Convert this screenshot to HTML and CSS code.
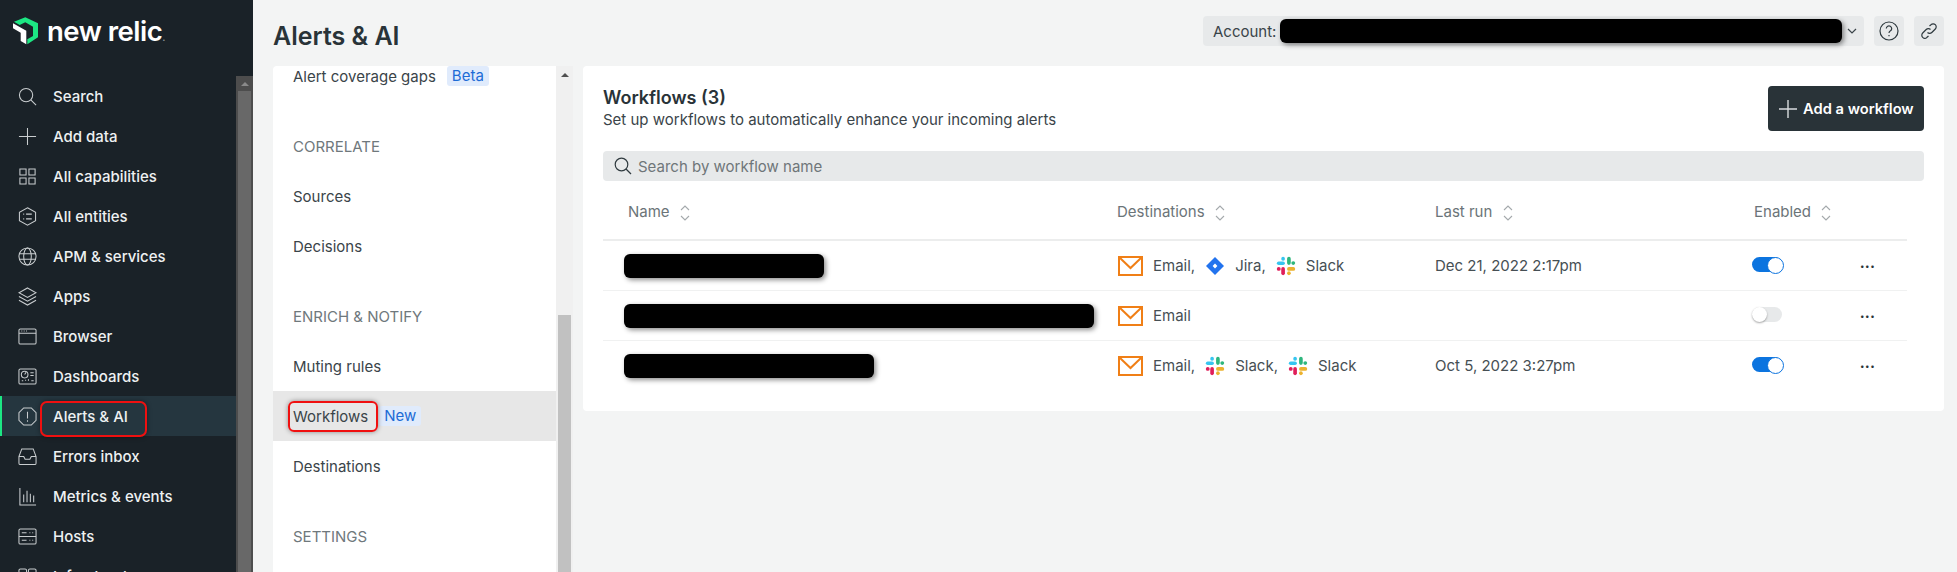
FILE: index.html
```html
<!DOCTYPE html>
<html lang="en">
<head>
  <meta charset="UTF-8" />
  <title>Alerts &amp; AI - Workflows</title>
  <link rel="stylesheet" href="styles.css">
</head>
<body>
  <svg class="sprite" width="0" height="0">
    <symbol id="mail" viewBox="0 0 25 20">
      <path d="M1 1h23v18H1z M1 1l11.5 11L24 1" fill="none" stroke="#f07f16" stroke-width="2"/>
    </symbol>
    <symbol id="slack" viewBox="0 0 24 24">
      <rect x="1" y="6.500" width="9.700" height="4.400" rx="2.200" fill="#36c5f0"/>
      <rect x="6.300" y="1" width="4.400" height="4.800" rx="2.200" fill="#36c5f0"/>
      <rect x="13.300" y="1" width="4.400" height="9.700" rx="2.200" fill="#2eb67d"/>
      <rect x="18.400" y="6.300" width="4.600" height="4.400" rx="2.200" fill="#2eb67d"/>
      <rect x="13.300" y="13.300" width="9.700" height="4.400" rx="2.200" fill="#ecb22e"/>
      <rect x="13.300" y="18.400" width="4.400" height="4.600" rx="2.200" fill="#ecb22e"/>
      <rect x="6.300" y="13.300" width="4.400" height="9.700" rx="2.200" fill="#e01e5a"/>
      <rect x="1" y="13.300" width="4.600" height="4.400" rx="2.200" fill="#e01e5a"/>
    </symbol>
    <symbol id="jira" viewBox="0 0 20 20">
      <path d="M10 1l9 9-9 9-9-9z" fill="#2273ee"/>
      <path d="M10 7.600l2.400 2.400-2.400 2.400-2.400-2.400z" fill="#fff"/>
    </symbol>
    <symbol id="sort" viewBox="0 0 10 18">
      <path d="M1 6l4-4 4 4M1 12l4 4 4-4" fill="none" stroke="#a4a9ac" stroke-width="1.100"/>
    </symbol>
  </svg>

  <nav class="sidebar">
    <div class="sidebar-main">
      <div class="logo">
        <svg class="logo-mark" width="26" height="30" viewBox="0 0 26 30">
          <path d="M1 5.700l11.300-4.400L25 7.300v14l-10.700 7v-5l5.700-3.300v-9.300l-7.700-4.400L6.700 9z" fill="#1ce783"/>
          <path d="M0 7.300l13.300 7.400v13.600l-5.600-3.300v-8.300L0 12.300z" fill="#fff"/>
        </svg>
        <span class="logo-text">new relic<small>.</small></span>
      </div>
      <a class="nav-item">
        <svg class="nav-icon" viewBox="0 0 20 20"><circle cx="8.500" cy="8.500" r="7"/><path d="M13.500 13.500l5.500 5.500"/></svg>
        <span>Search</span>
      </a>
      <a class="nav-item">
        <svg class="nav-icon" viewBox="0 0 20 20"><path d="M10 1v18M1 10h18"/></svg>
        <span>Add data</span>
      </a>
      <a class="nav-item">
        <svg class="nav-icon" viewBox="0 0 20 20"><path d="M2 2h6.500v6.500H2zM11.500 2H18v6.500h-6.500zM2 11.500h6.500V18H2zM11.500 11.500H18V18h-6.500z"/></svg>
        <span>All capabilities</span>
      </a>
      <a class="nav-item">
        <svg class="nav-icon" viewBox="0 0 20 20"><path d="M10 .8l8.500 4.700v9L10 19.200l-8.500-4.700v-9z"/><path d="M8.500 7.500h6M8.500 12.500h6M5.500 7.500h1M5.500 12.500h1"/></svg>
        <span>All entities</span>
      </a>
      <a class="nav-item">
        <svg class="nav-icon" viewBox="0 0 20 20"><circle cx="10" cy="10" r="9"/><ellipse cx="10" cy="10" rx="4" ry="9"/><path d="M1.500 7h17M1.500 13h17"/></svg>
        <span>APM &amp; services</span>
      </a>
      <a class="nav-item">
        <svg class="nav-icon" viewBox="0 0 20 20"><path d="M10 1l9 5-9 5-9-5z"/><path d="M1 10l9 5 9-5M1 14l9 5 9-5"/></svg>
        <span>Apps</span>
      </a>
      <a class="nav-item">
        <svg class="nav-icon" viewBox="0 0 20 20"><rect x="1" y="2" width="18" height="16" rx="1.500"/><path d="M1 6.500h18M3.500 4.300h1M6 4.300h1M8.500 4.300h1"/></svg>
        <span>Browser</span>
      </a>
      <a class="nav-item">
        <svg class="nav-icon" viewBox="0 0 20 20"><rect x="1" y="2" width="18" height="16" rx="1.500"/><circle cx="7" cy="8" r="3.500"/><path d="M7 8l1.500-2.500M13 6h3.500M13 9h3.500M4 14.500h1.500M8 14.500v-1M11 14.500v-1.500M14 14.500h2.500"/></svg>
        <span>Dashboards</span>
      </a>
      <a class="nav-item active">
        <svg class="nav-icon" viewBox="0 0 20 20"><path d="M6 1h8l5 5v8l-5 5H6l-5-5V6z"/><path d="M10 5v7M10 14v1.500"/></svg>
        <span>Alerts &amp; AI</span>
        <i class="callout callout-nav"></i>
      </a>
      <a class="nav-item">
        <svg class="nav-icon" viewBox="0 0 20 20"><path d="M1 10l3-8h12l3 8v7a1.500 1.500 0 0 1-1.500 1.500h-15A1.500 1.500 0 0 1 1 17z"/><path d="M1 10h5l1.500 3h5L14 10h5"/></svg>
        <span>Errors inbox</span>
      </a>
      <a class="nav-item">
        <svg class="nav-icon" viewBox="0 0 20 20"><path d="M2 1v18h17M6 8v8M9.500 4v12M13 7v9M16.500 9v7"/></svg>
        <span>Metrics &amp; events</span>
      </a>
      <a class="nav-item">
        <svg class="nav-icon" viewBox="0 0 20 20"><rect x="1" y="2" width="18" height="16" rx="1.500"/><path d="M1 10h18M4 6h5M12 6h1M15 6h1M4 14h5M12 14h1M15 14h1"/></svg>
        <span>Hosts</span>
      </a>
      <a class="nav-item">
        <svg class="nav-icon" viewBox="0 0 20 20"><rect x="1" y="2" width="8" height="16" rx="1.500"/><rect x="11" y="2" width="8" height="16" rx="1.500"/></svg>
        <span>Infrastructure</span>
      </a>
    </div>
    <div class="sidebar-scroll">
      <span class="scroll-arrow"></span>
      <span class="scroll-thumb"></span>
    </div>
  </nav>

  <main class="main">
    <header class="topbar">
      <h1 class="page-title">Alerts &amp; AI</h1>
      <div class="top-actions">
        <div class="account">
          <span>Account:</span>
          <span class="redact redact-account"></span>
          <svg width="10" height="6" viewBox="0 0 10 6"><path d="M1 1l4 4 4-4" fill="none" stroke="#3a4449" stroke-width="1.200"/></svg>
        </div>
        <button class="icon-btn">
          <svg width="20" height="20" viewBox="0 0 20 20"><circle cx="10" cy="10" r="9" fill="none" stroke="#2f3a3f" stroke-width="1.200"/><path d="M7.300 7.500a2.700 2.700 0 1 1 4.200 2.300c-.9.600-1.500 1-1.500 2.200M10 14v1.200" fill="none" stroke="#2f3a3f" stroke-width="1.200"/></svg>
        </button>
        <button class="icon-btn">
          <svg width="18" height="18" viewBox="0 0 18 18"><path d="M7.500 10.500a3 3 0 0 0 4.300 0l3.500-3.500a3 3 0 0 0-4.300-4.300L9.500 4M10.500 7.500a3 3 0 0 0-4.300 0L2.700 11a3 3 0 0 0 4.300 4.300L8.500 14" fill="none" stroke="#2f3a3f" stroke-width="1.200"/></svg>
        </button>
      </div>
    </header>

    <div class="content">
      <div class="menu-wrap">
        <div class="menu">
          <div class="menu-list">
            <a class="menu-item">Alert coverage gaps <span class="badge badge-beta">Beta</span></a>
            <div class="menu-section">CORRELATE</div>
            <a class="menu-item">Sources</a>
            <a class="menu-item">Decisions</a>
            <div class="menu-section">ENRICH &amp; NOTIFY</div>
            <a class="menu-item">Muting rules</a>
            <a class="menu-item selected"><span class="callout-text">Workflows</span> <span class="badge">New</span></a>
            <a class="menu-item">Destinations</a>
            <div class="menu-section">SETTINGS</div>
          </div>
        </div>
        <div class="menu-scroll">
          <span class="menu-arrow"></span>
          <span class="menu-thumb"></span>
        </div>
      </div>

      <section class="card">
        <div class="card-head">
          <div>
            <h2 class="card-title">Workflows (3)</h2>
            <p class="card-sub">Set up workflows to automatically enhance your incoming alerts</p>
          </div>
          <button class="add-btn">
            <svg width="18" height="18" viewBox="0 0 18 18"><path d="M9 0v18M0 9h18" stroke="#d8dcde" stroke-width="1.400"/></svg>
            Add a workflow
          </button>
        </div>

        <div class="search-box">
          <svg width="18" height="18" viewBox="0 0 18 18"><circle cx="7.500" cy="7.500" r="6.300" fill="none" stroke="#2f3a3f" stroke-width="1.200"/><path d="M12 12l5 5" stroke="#2f3a3f" stroke-width="1.200"/></svg>
          <span>Search by workflow name</span>
        </div>

        <div class="table">
          <div class="row row-head">
            <div class="cell-name">Name <svg class="sort"><use href="#sort"/></svg></div>
            <div>Destinations <svg class="sort"><use href="#sort"/></svg></div>
            <div>Last run <svg class="sort"><use href="#sort"/></svg></div>
            <div>Enabled <svg class="sort"><use href="#sort"/></svg></div>
            <div></div>
          </div>

          <div class="row">
            <div><span class="redact redact-name" style="width: 200px"></span></div>
            <div class="dests">
              <svg class="ic-mail"><use href="#mail"/></svg><span>Email,</span>
              <svg class="ic-svc"><use href="#jira"/></svg><span>Jira,</span>
              <svg class="ic-svc"><use href="#slack"/></svg><span>Slack</span>
            </div>
            <div>Dec 21, 2022 2:17pm</div>
            <div><span class="toggle on"></span></div>
            <div class="dots">&bull;&bull;&bull;</div>
          </div>

          <div class="row">
            <div><span class="redact redact-name" style="width: 470px"></span></div>
            <div class="dests">
              <svg class="ic-mail"><use href="#mail"/></svg><span>Email</span>
            </div>
            <div></div>
            <div><span class="toggle"></span></div>
            <div class="dots">&bull;&bull;&bull;</div>
          </div>

          <div class="row">
            <div><span class="redact redact-name" style="width: 250px"></span></div>
            <div class="dests">
              <svg class="ic-mail"><use href="#mail"/></svg><span>Email,</span>
              <svg class="ic-svc"><use href="#slack"/></svg><span>Slack,</span>
              <svg class="ic-svc"><use href="#slack"/></svg><span>Slack</span>
            </div>
            <div>Oct 5, 2022 3:27pm</div>
            <div><span class="toggle on"></span></div>
            <div class="dots">&bull;&bull;&bull;</div>
          </div>
        </div>
      </section>
    </div>
  </main>
</body>
</html>
```

FILE: styles.css
```css
* {
  box-sizing: border-box;
}

body {
  display: flex;
  height: 100vh;
  margin: 0;
  overflow: hidden;
  background: #f3f4f4;
  color: #293338;
  font-family: Inter, "Noto Sans", sans-serif;
  font-size: 15px;
}

.sprite {
  position: absolute;
}

.redact {
  display: inline-block;
  background: #000;
  border-radius: 6px;
  box-shadow: 2px 2px 5px rgba(0, 0, 0, 0.45);
}

/* left nav */
.sidebar {
  display: flex;
  flex: 0 0 253px;
  height: 100%;
  overflow: hidden;
  background: #1a2228;
}

.sidebar-main {
  flex: 1;
}

.logo {
  display: flex;
  align-items: center;
  gap: 8px;
  height: 76px;
  padding: 0 0 15px 13px;
}

.logo-text {
  color: #fff;
  font-size: 27.500px;
  font-weight: 600;
  letter-spacing: -0.5px;
}

.logo-text small {
  color: #8a9296;
  font-size: 10px;
}

.nav-item {
  position: relative;
  display: flex;
  flex-shrink: 0;
  align-items: center;
  gap: 16px;
  height: 40px;
  padding-left: 18px;
  color: #eef1f2;
  font-weight: 500;
}

.nav-item.active {
  background: #25363f;
  box-shadow: inset 2px 0 0 #1ce783;
}

.nav-icon {
  width: 19px;
  height: 19px;
  fill: none;
  stroke: #c9cdcf;
  stroke-width: 1.100;
}

.callout {
  position: absolute;
  top: 5px;
  left: 40px;
  width: 107px;
  height: 36px;
  border: 2px solid #f01010;
  border-radius: 7px;
  box-shadow: 0 0 5px rgba(0, 0, 0, 0.4);
}

.sidebar-scroll {
  display: flex;
  flex: 0 0 17px;
  flex-direction: column;
  align-items: center;
  margin-top: 76px;
  background: #4d4d4d;
}

.scroll-arrow {
  margin: 6px 0 5px;
  border-right: 4px solid transparent;
  border-bottom: 4px solid #8a8a8a;
  border-left: 4px solid transparent;
}

.scroll-thumb {
  flex: 1;
  width: 13px;
  background: #686868;
}

/* main area */
.main {
  display: flex;
  flex: 1;
  flex-direction: column;
  min-width: 0;
  padding: 0 13px 0 20px;
}

.topbar {
  display: flex;
  flex: 0 0 66px;
  align-items: flex-start;
  justify-content: space-between;
}

.page-title {
  margin: 19px 0 0;
  font-size: 25px;
  font-weight: 600;
  line-height: 34px;
}

.top-actions {
  display: flex;
  gap: 10px;
  margin-top: 16px;
}

.account {
  display: flex;
  align-items: center;
  width: 661px;
  height: 30px;
  padding-left: 10px;
  background: #e7e9ea;
  border-radius: 4px;
  color: #3a4449;
}

.redact-account {
  width: 562px;
  height: 24px;
  margin: 0 5px 0 4px;
}

.icon-btn {
  display: flex;
  align-items: center;
  justify-content: center;
  width: 30px;
  height: 30px;
  padding: 0;
  background: #e7e9ea;
  border: 0;
  border-radius: 4px;
}

.content {
  display: flex;
  flex: 1;
  gap: 10px;
  min-height: 0;
}

/* second column menu */
.menu-wrap {
  display: flex;
  flex: 0 0 300px;
  min-height: 0;
}

.menu {
  flex: 0 0 283px;
  overflow: hidden;
  background: #fff;
  border-radius: 4px 0 0 0;
}

.menu-list {
  margin-top: -15px;
}

.menu-item {
  display: flex;
  align-items: center;
  height: 50px;
  padding-left: 20px;
  color: #3a4449;
}

.menu-item.selected {
  background: #e7e7e7;
}

.menu-section {
  display: flex;
  align-items: center;
  height: 50px;
  margin-top: 20px;
  padding-left: 20px;
  color: #6f787c;
}

.badge {
  margin-left: 11px;
  padding: 0 5px;
  background: #e0ebfc;
  border-radius: 3px;
  color: #1d6bd6;
  line-height: 20px;
}

.callout-text {
  position: relative;
}

.callout-text::after {
  content: "";
  position: absolute;
  top: -6px;
  right: -10px;
  bottom: -6px;
  left: -5px;
  border: 2px solid #f01010;
  border-radius: 6px;
  box-shadow: 0 0 5px rgba(0, 0, 0, 0.4);
}

.menu-scroll {
  display: flex;
  flex: 0 0 17px;
  flex-direction: column;
  align-items: center;
  background: #f0f0f0;
}

.menu-arrow {
  margin-top: 7px;
  border-right: 4px solid transparent;
  border-bottom: 4px solid #505050;
  border-left: 4px solid transparent;
}

.menu-thumb {
  flex: 1;
  width: 13px;
  margin-top: 238px;
  background: #c1c1c1;
}

/* workflows card */
.card {
  flex: 1;
  align-self: flex-start;
  height: 345px;
  padding: 20px 20px 0;
  background: #fff;
  border-radius: 4px;
}

.card-head {
  display: flex;
  justify-content: space-between;
  height: 65px;
}

.card-title {
  margin: 0;
  font-size: 18px;
  font-weight: 600;
  line-height: 24px;
}

.card-sub {
  margin: 0;
  color: #3a4449;
  line-height: 20px;
}

.add-btn {
  display: flex;
  align-items: center;
  gap: 6px;
  width: 156px;
  height: 45px;
  padding: 0 0 0 11px;
  background: #293338;
  border: 0;
  border-radius: 4px;
  color: #fff;
  font: 600 14.700px Inter, sans-serif;
}

.search-box {
  display: flex;
  align-items: center;
  gap: 6px;
  height: 30px;
  padding-left: 11px;
  background: #e7e9ea;
  border-radius: 4px;
  color: #6f7679;
}

.table {
  margin-right: 17px;
}

.row {
  display: grid;
  grid-template-columns: 514px 318px 319px 106px 1fr;
  align-items: center;
  height: 50px;
  border-top: 1px solid #f0f1f1;
  color: #464f54;
}

.row-head {
  height: 60px;
  padding-top: 4px;
  border-top: 0;
  border-bottom: 2px solid #eceded;
  color: #6b7478;
}

.row-head + .row {
  height: 49px;
  border-top: 0;
}

.cell-name {
  padding-left: 25px;
}

.sort {
  width: 10px;
  height: 18px;
  margin-left: 6px;
  vertical-align: middle;
}

.redact-name {
  display: block;
  height: 24px;
  margin-left: 21px;
}

.dests {
  display: flex;
  align-items: center;
}

.ic-mail {
  width: 25px;
  height: 20px;
  margin: 0 10px 0 1px;
}

.ic-svc {
  width: 20px;
  height: 20px;
  margin: 0 10px;
}

.toggle {
  position: relative;
  display: block;
  width: 30px;
  height: 15px;
  margin: -3px 0 0 -2px;
  background: #e7e9ea;
  border-radius: 8px;
}

.toggle::after {
  content: "";
  position: absolute;
  top: 0;
  left: 0;
  width: 15px;
  height: 15px;
  background: #fff;
  border-radius: 50%;
  box-shadow: 0 1px 2px rgba(0, 0, 0, 0.35);
}

.toggle.on {
  background: #0c74df;
}

.toggle.on::after {
  left: 15px;
  border: 1px solid #0c74df;
  box-shadow: none;
}

.dots {
  color: #293338;
  font-size: 8px;
  letter-spacing: 0.6px;
}
```
